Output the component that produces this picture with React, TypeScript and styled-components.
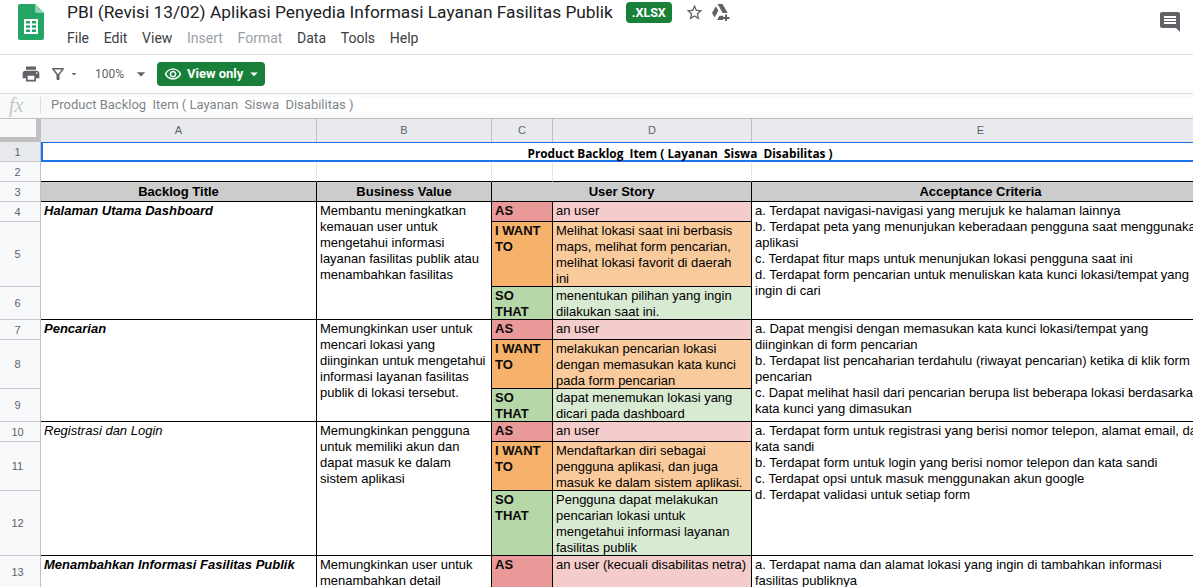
import React from "react";
import styled, { createGlobalStyle } from "styled-components";
import {
  MdArrowDropDown,
  MdComment,
  MdOutlineFilterAlt,
  MdOutlineRemoveRedEye,
  MdPrint,
  MdStarBorder,
} from "react-icons/md";

const Global = createGlobalStyle`
  html, body { margin: 0; padding: 0; background: #fff; }
  * { box-sizing: border-box; }
`;

const Page = styled.div`
  width: 1193px;
  height: 587px;
  overflow: hidden;
  display: flex;
  flex-direction: column;
  background: #fff;
  font-family: Roboto, "Liberation Sans", sans-serif;
`;

const TopBar = styled.header`
  flex: 0 0 55px;
  display: flex;
  border-bottom: 1px solid #dadce0;
  padding: 4px 11px 0 18px;
`;

const LogoBox = styled.div`
  flex: 0 0 49px;
`;

const TitleColumn = styled.div`
  flex: 1;
  display: flex;
  flex-direction: column;
`;

const TitleRow = styled.div`
  display: flex;
  align-items: center;
  height: 20px;
  margin-top: -2px;
`;

const DocTitle = styled.div`
  font-size: 17.33px;
  color: #202124;
  line-height: 24px;
  white-space: nowrap;
`;

const Badge = styled.div`
  margin-left: 13px;
  width: 46px;
  height: 21px;
  border-radius: 4px;
  background: #188038;
  color: #fff;
  font: bold 12.5px/21px Roboto, sans-serif;
  text-align: center;
`;

const TitleIcons = styled.div`
  display: flex;
  align-items: center;
  margin-left: 13px;
  gap: 8px;
  color: #5f6368;
`;

const MenuBar = styled.nav`
  display: flex;
  margin-top: 7px;
  gap: 14.7px;
`;

const MenuItem = styled.span<{ $off?: boolean }>`
  font-size: 14px;
  line-height: 18px;
  color: ${(p) => (p.$off ? "#9aa0a6" : "#3c4043")};
`;

const CommentBox = styled.div`
  color: #5f6368;
  padding-top: 6px;
`;

const Toolbar = styled.div`
  flex: 0 0 39px;
  display: flex;
  align-items: center;
  padding-left: 21px;
  border-bottom: 1px solid #dadce0;
  color: #5f6368;
`;

const ToolIcon = styled.span<{ $w: number; $ml?: number }>`
  display: flex;
  justify-content: center;
  width: ${(p) => p.$w}px;
  margin-left: ${(p) => p.$ml ?? 0}px;
`;

const Zoom = styled.span`
  margin-left: 15px;
  width: 36px;
  font-size: 12px;
  color: #5f6368;
`;

const ViewButton = styled.div`
  margin-left: 6px;
  width: 108px;
  height: 24px;
  border-radius: 4px;
  background: #188038;
  color: #fff;
  display: flex;
  align-items: center;
  padding-left: 7px;
  font: 13px/24px Roboto, sans-serif;
  gap: 2px;
  white-space: nowrap;
`;

const ViewLabel = styled.span`
  font-weight: 700;
  margin-left: 3px;
  flex: 0 0 auto;
`;

const FormulaBar = styled.div`
  flex: 0 0 24px;
  display: flex;
  align-items: center;
  background: #f8f9fa;
  padding: 3px 0 4px;
`;

const Fx = styled.div`
  flex: 0 0 40px;
  padding-left: 9px;
  font: italic 20px/17px "Liberation Serif", serif;
  color: #c4c7c5;
  height: 17px;
`;

const FormulaInput = styled.div`
  flex: 1;
  height: 17px;
  border-left: 1px solid #dadce0;
  padding-left: 10px;
  background: linear-gradient(to right, #f8f9fa 10px, #fff 10px);
  font-size: 13px;
  line-height: 15px;
  color: #80868b;
  white-space: pre;
`;

const Sheet = styled.div`
  flex: 1;
  display: grid;
  grid-template-columns: 41px 276px 175px 61px 199px 458px 109px;
  grid-template-rows: 24px 20px 20px 20px 20px 65px 33px 20px 49px 33px 20px 49px 65px 33px;
  font-family: "Liberation Sans", Arial, sans-serif;
  font-size: 13px;
  line-height: 16px;
  color: #000;
  overflow: hidden;
  width: 1193px;
`;

type Place = { $r: number; $c: number; $rs?: number; $cs?: number };
const place = (p: Place) =>
  `grid-row: ${p.$r} / span ${p.$rs ?? 1}; grid-column: ${p.$c} / span ${p.$cs ?? 1};`;

const Corner = styled.div`
  grid-row: 1;
  grid-column: 1;
  background: #f8f9fa;
  border-top: 1px solid #c0c0c0;
  border-right: 5px solid #c0c0c0;
  border-bottom: 5px solid #c0c0c0;
`;

const ColumnHead = styled.div<{ $c: number }>`
  grid-row: 1;
  grid-column: ${(p) => p.$c};
  background: #e8eaed;
  border-top: 1px solid #c0c0c0;
  border-right: 1px solid #c0c0c0;
  font-size: 11px;
  line-height: 23px;
  text-align: center;
  color: #5f6368;
`;

const RowHead = styled.div<{ $r: number; $on?: boolean }>`
  grid-row: ${(p) => p.$r + 1};
  grid-column: 1;
  display: flex;
  align-items: center;
  justify-content: center;
  padding-right: 5px;
  background: ${(p) => (p.$on ? "#e8eaed" : "#f8f9fa")};
  border-right: 1px solid #c0c0c0;
  border-bottom: 1px solid #c7c9cc;
  font-size: 11px;
  color: #5f6368;
`;

const TitleCell = styled.div`
  grid-row: 2;
  grid-column: 2 / span 6;
  border: 2px solid #1a73e8;
  border-top-width: 1px;
  padding-top: 2px;
  font: bold 11.85px/16px "Open Sans", sans-serif;
  text-align: center;
  white-space: pre;
  color: #000;
`;

const BlankCell = styled.div<{ $c: number }>`
  grid-row: 3;
  grid-column: ${(p) => p.$c};
  border-right: 1px solid #e2e3e3;
  border-bottom: 1px solid #000;
`;

const HeadCell = styled.div<Place>`
  ${place}
  background: #cccccc;
  border-right: 1px solid #000;
  border-bottom: 1px solid #000;
  font-weight: bold;
  line-height: 19px;
  text-align: center;
  white-space: nowrap;
`;

const TextCell = styled.div<Place & { $bold?: boolean; $italic?: boolean }>`
  ${place}
  border-right: 1px solid #000;
  border-bottom: 1px solid #000;
  padding: 1px 3px 0;
  overflow: hidden;
  font-weight: ${(p) => (p.$bold ? "bold" : "normal")};
  font-style: ${(p) => (p.$italic ? "italic" : "normal")};
`;

const CriteriaLine = styled.div``;

const StoryTag = styled.div<{ $r: number; $rs?: number; $bg: string }>`
  grid-row: ${(p) => p.$r} / span ${(p) => p.$rs ?? 1};
  grid-column: 4;
  background: ${(p) => p.$bg};
  border-right: 1px solid #000;
  border-bottom: 1px solid #000;
  padding: 1px 3px 0;
  font-weight: bold;
  overflow: hidden;
  color: #0a0a0a;
`;

const StoryText = styled.div<{ $r: number; $rs?: number; $bg: string }>`
  grid-row: ${(p) => p.$r} / span ${(p) => p.$rs ?? 1};
  grid-column: 5;
  background: ${(p) => p.$bg};
  border-right: 1px solid #000;
  border-bottom: 1px solid #000;
  padding: 1px 3px 0;
  overflow: hidden;
`;

const SheetsLogo = () => (
  <svg width="26" height="36" viewBox="0 0 26 36">
    <path d="M2 0h15l9 9v25a2 2 0 0 1-2 2H2a2 2 0 0 1-2-2V2a2 2 0 0 1 2-2z" fill="#23a566" />
    <path d="M17 0l9 9h-7a2 2 0 0 1-2-2z" fill="#8ed1b1" />
    <path
      d="M6 15h14v15H6z M8 17v2.5h4V17z M14 17v2.5h4V17z M8 21.2v2.5h4v-2.5z M14 21.2v2.5h4v-2.5z M8 25.5V28h4v-2.5z M14 25.5V28h4v-2.5z"
      fill="#fff"
      fillRule="evenodd"
    />
  </svg>
);

const DriveAddIcon = () => (
  <svg width="18" height="17" viewBox="0 0 18 17" fill="currentColor">
    <path d="M5.5 0h5l5.2 9h-5z" />
    <path d="M3.8 2.2l2.6 4.4L2.6 13.4 0 9z" />
    <path d="M5 16l2.4-4.2h3.8V16z" />
    <path d="M13 10.5h2v2.5h2.6v2H15v2h-2v-2h-2v-2h2z" />
  </svg>
);

const COLORS = {
  as: ["#ea9999", "#f4cccc"],
  want: ["#f6b26b", "#f9cb9c"],
  so: ["#b6d7a8", "#d9ead3"],
};

const stories = [
  { r: 5, kind: "as", tag: "AS", text: "an user" },
  { r: 6, kind: "want", tag: "I WANT TO", text: "Melihat lokasi saat ini berbasis maps, melihat form pencarian, melihat lokasi favorit di daerah ini" },
  { r: 7, kind: "so", tag: "SO THAT", text: "menentukan pilihan yang ingin dilakukan saat ini." },
  { r: 8, kind: "as", tag: "AS", text: "an user" },
  { r: 9, kind: "want", tag: "I WANT TO", text: "melakukan pencarian lokasi dengan memasukan kata kunci pada form pencarian" },
  { r: 10, kind: "so", tag: "SO THAT", text: "dapat menemukan lokasi yang dicari pada dashboard" },
  { r: 11, kind: "as", tag: "AS", text: "an user" },
  { r: 12, kind: "want", tag: "I WANT TO", text: "Mendaftarkan diri sebagai pengguna aplikasi, dan juga masuk ke dalam sistem aplikasi." },
  { r: 13, kind: "so", tag: "SO THAT", text: "Pengguna dapat melakukan pencarian lokasi untuk mengetahui informasi layanan fasilitas publik" },
  { r: 14, kind: "as", tag: "AS", text: "an user (kecuali disabilitas netra)" },
] as const;

const features = [
  {
    r: 5, rs: 3, bold: true, italic: true, title: "Halaman Utama Dashboard",
    value: "Membantu meningkatkan kemauan user untuk mengetahui informasi layanan fasilitas publik atau menambahkan fasilitas",
    criteria: [
      "a. Terdapat navigasi-navigasi yang merujuk ke halaman lainnya",
      "b. Terdapat peta yang menunjukan keberadaan pengguna saat menggunakan aplikasi",
      "c. Terdapat fitur maps untuk menunjukan lokasi pengguna saat ini",
      "d. Terdapat form pencarian untuk menuliskan kata kunci lokasi/tempat yang ingin di cari",
    ],
  },
  {
    r: 8, rs: 3, bold: true, italic: true, title: "Pencarian",
    value: "Memungkinkan user untuk mencari lokasi yang diinginkan untuk mengetahui informasi layanan fasilitas publik di lokasi tersebut.",
    criteria: [
      "a. Dapat mengisi dengan memasukan kata kunci lokasi/tempat yang diinginkan di form pencarian",
      "b. Terdapat list pencaharian terdahulu (riwayat pencarian) ketika di klik form pencarian",
      "c. Dapat melihat hasil dari pencarian berupa list beberapa lokasi berdasarkan kata kunci yang dimasukan",
    ],
  },
  {
    r: 11, rs: 3, bold: false, italic: true, title: "Registrasi dan Login",
    value: "Memungkinkan pengguna untuk memiliki akun dan dapat masuk ke dalam sistem aplikasi",
    criteria: [
      "a. Terdapat form untuk registrasi yang berisi nomor telepon, alamat email, dan kata sandi",
      "b. Terdapat form untuk login yang berisi nomor telepon dan kata sandi",
      "c. Terdapat opsi untuk masuk menggunakan akun google",
      "d. Terdapat validasi untuk setiap form",
    ],
  },
  {
    r: 14, rs: 1, bold: true, italic: true, title: "Menambahkan Informasi Fasilitas Publik",
    value: "Memungkinkan user untuk menambahkan detail",
    criteria: ["a. Terdapat nama dan alamat lokasi yang ingin di tambahkan informasi fasilitas publiknya"],
  },
];

const menus: [string, boolean][] = [
  ["File", false], ["Edit", false], ["View", false], ["Insert", true],
  ["Format", true], ["Data", false], ["Tools", false], ["Help", false],
];

const TITLE = "Product Backlog  Item ( Layanan  Siswa  Disabilitas )";

export default function App() {
  return (
    <Page>
      <Global />
      <TopBar>
        <LogoBox><SheetsLogo /></LogoBox>
        <TitleColumn>
          <TitleRow>
            <DocTitle>PBI (Revisi 13/02) Aplikasi Penyedia Informasi Layanan Fasilitas Publik</DocTitle>
            <Badge>.XLSX</Badge>
            <TitleIcons>
              <MdStarBorder size={19} />
              <DriveAddIcon />
            </TitleIcons>
          </TitleRow>
          <MenuBar>
            {menus.map(([m, off]) => <MenuItem key={m} $off={off}>{m}</MenuItem>)}
          </MenuBar>
        </TitleColumn>
        <CommentBox><MdComment size={24} /></CommentBox>
      </TopBar>
      <Toolbar>
        <ToolIcon $w={20}><MdPrint size={20} /></ToolIcon>
        <ToolIcon $w={18} $ml={8}><MdOutlineFilterAlt size={20} /></ToolIcon>
        <ToolIcon $w={12} $ml={1}><MdArrowDropDown size={14} /></ToolIcon>
        <Zoom>100%</Zoom>
        <ToolIcon $w={20}><MdArrowDropDown size={20} /></ToolIcon>
        <ViewButton>
          <MdOutlineRemoveRedEye size={18} />
          <ViewLabel>View only</ViewLabel>
          <MdArrowDropDown size={18} />
        </ViewButton>
      </Toolbar>
      <FormulaBar>
        <Fx>fx</Fx>
        <FormulaInput>{TITLE}</FormulaInput>
      </FormulaBar>
      <Sheet>
        <Corner />
        {["A", "B", "C", "D", "E", "F"].map((l, i) => (
          <ColumnHead key={l} $c={i + 2}>{l}</ColumnHead>
        ))}
        {[1, 2, 3, 4, 5, 6, 7, 8, 9, 10, 11, 12, 13].map((n) => (
          <RowHead key={n} $r={n} $on={n === 1}>{n}</RowHead>
        ))}
        <TitleCell>{TITLE}</TitleCell>
        {[2, 3, 4, 5, 6, 7].map((c) => <BlankCell key={c} $c={c} />)}
        <HeadCell $r={4} $c={2}>Backlog Title</HeadCell>
        <HeadCell $r={4} $c={3}>Business Value</HeadCell>
        <HeadCell $r={4} $c={4} $cs={2}>User Story</HeadCell>
        <HeadCell $r={4} $c={6}>Acceptance Criteria</HeadCell>
        {features.map((f) => (
          <React.Fragment key={f.r}>
            <TextCell $r={f.r} $rs={f.rs} $c={2} $bold={f.bold} $italic={f.italic}>{f.title}</TextCell>
            <TextCell $r={f.r} $rs={f.rs} $c={3}>{f.value}</TextCell>
            <TextCell $r={f.r} $rs={f.rs} $c={6}>
              {f.criteria.map((c) => <CriteriaLine key={c}>{c}</CriteriaLine>)}
            </TextCell>
          </React.Fragment>
        ))}
        {stories.map((s) => (
          <React.Fragment key={s.r}>
            <StoryTag $r={s.r} $bg={COLORS[s.kind][0]}>{s.tag}</StoryTag>
            <StoryText $r={s.r} $bg={COLORS[s.kind][1]}>{s.text}</StoryText>
          </React.Fragment>
        ))}
      </Sheet>
    </Page>
  );
}
